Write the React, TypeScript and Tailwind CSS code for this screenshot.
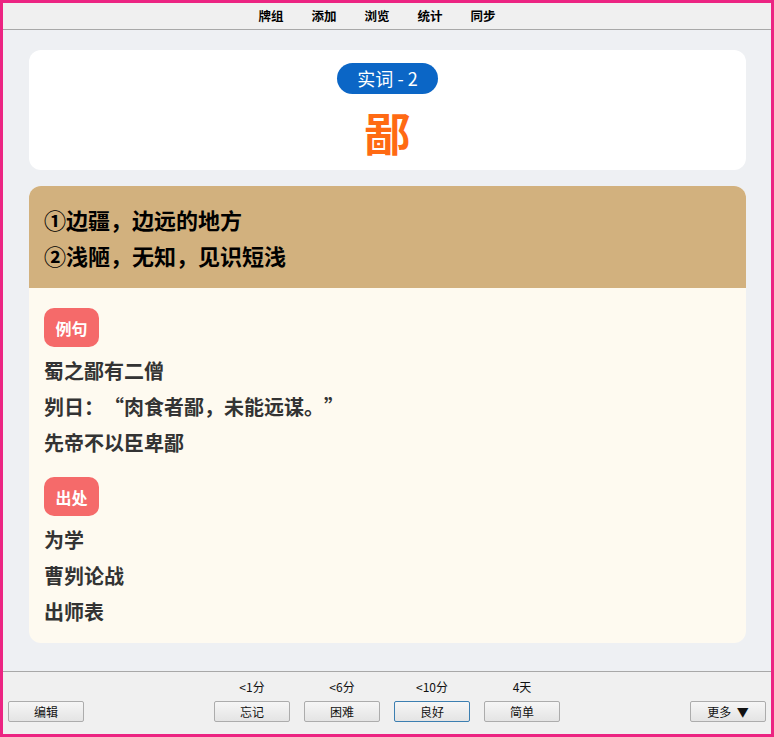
const cjk = '"Noto Sans CJK SC", "Noto Sans", sans-serif'

const examples = [
  '蜀之鄙有二僧',
  '刿日：“肉食者鄙，未能远谋。”',
  '先帝不以臣卑鄙',
]

const sources = ['为学', '曹刿论战', '出师表']

const answers = [
  { hint: '<1分', label: '忘记', focused: false },
  { hint: '<6分', label: '困难', focused: false },
  { hint: '<10分', label: '良好', focused: true },
  { hint: '4天', label: '简单', focused: false },
]

function Tag({ text }: { text: string }) {
  return (
    <div className="flex h-[39px] w-[55px] items-center justify-center rounded-[10px] bg-[#f56a6a] text-[16px] font-bold text-white">
      {text}
    </div>
  )
}

function Line({ text }: { text: string }) {
  return (
    <div className="h-[36px] text-[20px] font-bold leading-[36px] text-[#333333] [font-feature-settings:'fwid']">
      {text}
    </div>
  )
}

function WinButton({
  label,
  focused = false,
}: {
  label: string
  focused?: boolean
}) {
  return (
    <button
      className={`
        h-[21px]
        w-[76px]
        rounded-[2px]
        border
        bg-gradient-to-b
        from-[#f6f6f6]
        to-[#e4e4e4]
        text-[12px]
        leading-[19px]
        whitespace-pre
        text-[#111111]
        ${focused ? 'border-[#3c7fb1]' : 'border-[#acacac]'}
      `}
    >
      {label}
    </button>
  )
}

export default function App() {
  return (
    <div
      className="flex h-[737px] w-[774px] flex-col border-[3px] border-[#ec2482] bg-[#eef0f3] [text-spacing-trim:space-all]"
      style={{ fontFamily: cjk }}
    >
      <div className="flex h-[27px] shrink-0 items-center justify-center gap-[28px] border-b border-[#a8a8a8] bg-[#f0f0f0] pr-[20px] text-[12.5px] font-bold text-black">
        <span>牌组</span>
        <span>添加</span>
        <span>浏览</span>
        <span>统计</span>
        <span>同步</span>
      </div>

      <div className="flex flex-1 flex-col gap-[16px] pl-[26px] pr-[25px] pt-[20px]">
        <div className="flex h-[120px] flex-col items-center rounded-[12px] bg-white pt-[13px]">
          <div className="flex h-[31px] items-center rounded-full bg-[#0b66c6] px-[20px] text-[18px] text-white">
            实词 - 2
          </div>
          <div className="mt-[8px] text-[46px] font-bold leading-[58px] text-[#ff6a13]">
            鄙
          </div>
        </div>

        <div className="overflow-hidden rounded-[12px] bg-[#fefaf0]">
          <div className="bg-[#d2b17e] px-[15px] py-[15px] text-[22px] font-bold leading-[36px] text-black">
            <div>①边疆，边远的地方</div>
            <div>②浅陋，无知，见识短浅</div>
          </div>

          <div className="px-[15px] pb-[13px] pt-[20px]">
            <Tag text="例句" />
            <div className="mt-[6px]">
              {examples.map((item, index) => (
                <Line key={index} text={item} />
              ))}
            </div>

            <div className="mt-[16px]">
              <Tag text="出处" />
            </div>
            <div className="mt-[6px]">
              {sources.map((item, index) => (
                <Line key={index} text={item} />
              ))}
            </div>
          </div>
        </div>
      </div>

      <div className="flex h-[63px] shrink-0 items-end border-t border-[#a8a8a8] bg-[#f0f0f0] px-[5px] pb-[12px]">
        <div className="flex flex-1">
          <WinButton label="编辑" />
        </div>

        <div className="flex gap-[14px]">
          {answers.map(item => (
            <div key={item.label} className="flex flex-col items-center">
              <div className="mb-[5px] text-[12px] leading-[18px] text-[#111111]">
                {item.hint}
              </div>
              <WinButton label={item.label} focused={item.focused} />
            </div>
          ))}
        </div>

        <div className="flex flex-1 justify-end">
          <WinButton label={'更多\u00a0\u00a0▼'} />
        </div>
      </div>
    </div>
  )
}
